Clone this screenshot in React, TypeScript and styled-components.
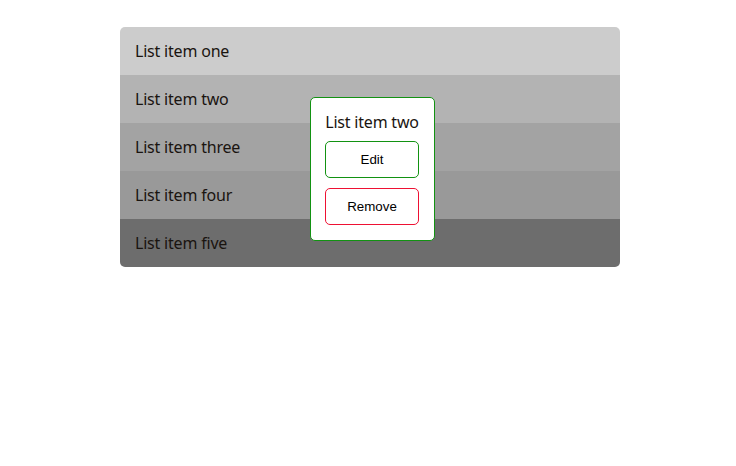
import React from "react";
import styled, { createGlobalStyle } from "styled-components";

const Global = createGlobalStyle`
  html, body { margin: 0; padding: 0; background: #fff; }
  body { font-family: "Noto Sans", "Open Sans", sans-serif; }
`;

const Page = styled.div`
  display: flex;
  justify-content: center;
  padding-top: 27px;
  padding-left: 4px;
`;

const Wrap = styled.div`
  position: relative;
  width: 500px;
`;

const List = styled.ul`
  list-style: none;
  margin: 0;
  padding: 0;
  border-radius: 5px;
  overflow: hidden;
`;

const Row = styled.li<{ $bg: string }>`
  height: 48px;
  display: flex;
  align-items: center;
  padding-left: 15px;
  background: ${(p) => p.$bg};
  color: #1a1410;
  font-size: 16px;
  letter-spacing: -0.2px;
`;

const Popup = styled.div`
  position: absolute;
  left: 190px;
  top: 70px;
  width: 94px;
  padding: 14px 15px 15px 14px;
  background: #fff;
  border: 1px solid #129212;
  border-radius: 5px;
  display: flex;
  flex-direction: column;
  align-items: stretch;
`;

const Title = styled.div`
  font-size: 16px;
  line-height: 20px;
  height: 20px;
  margin-bottom: 9px;
  text-align: center;
  color: #1a1410;
  white-space: nowrap;
  letter-spacing: -0.2px;
`;

const Btn = styled.button<{ $color: string }>`
  height: 37px;
  background: #fff;
  border: 1px solid ${(p) => p.$color};
  border-radius: 5px;
  font-family: "Liberation Sans", Arial, sans-serif;
  font-size: 13.33px;
  color: #000;
  padding: 0;
  & + & { margin-top: 10px; }
`;

const items: [string, string][] = [
  ["List item one", "#cccccc"],
  ["List item two", "#b3b3b3"],
  ["List item three", "#a3a3a3"],
  ["List item four", "#999999"],
  ["List item five", "#6d6d6d"],
];

export default function App() {
  return (
    <>
      <Global />
      <Page>
        <Wrap>
          <List>
            {items.map(([t, c]) => (
              <Row key={t} $bg={c}>{t}</Row>
            ))}
          </List>
          <Popup>
            <Title>List item two</Title>
            <Btn $color="#129212">Edit</Btn>
            <Btn $color="#ee1133">Remove</Btn>
          </Popup>
        </Wrap>
      </Page>
    </>
  );
}
